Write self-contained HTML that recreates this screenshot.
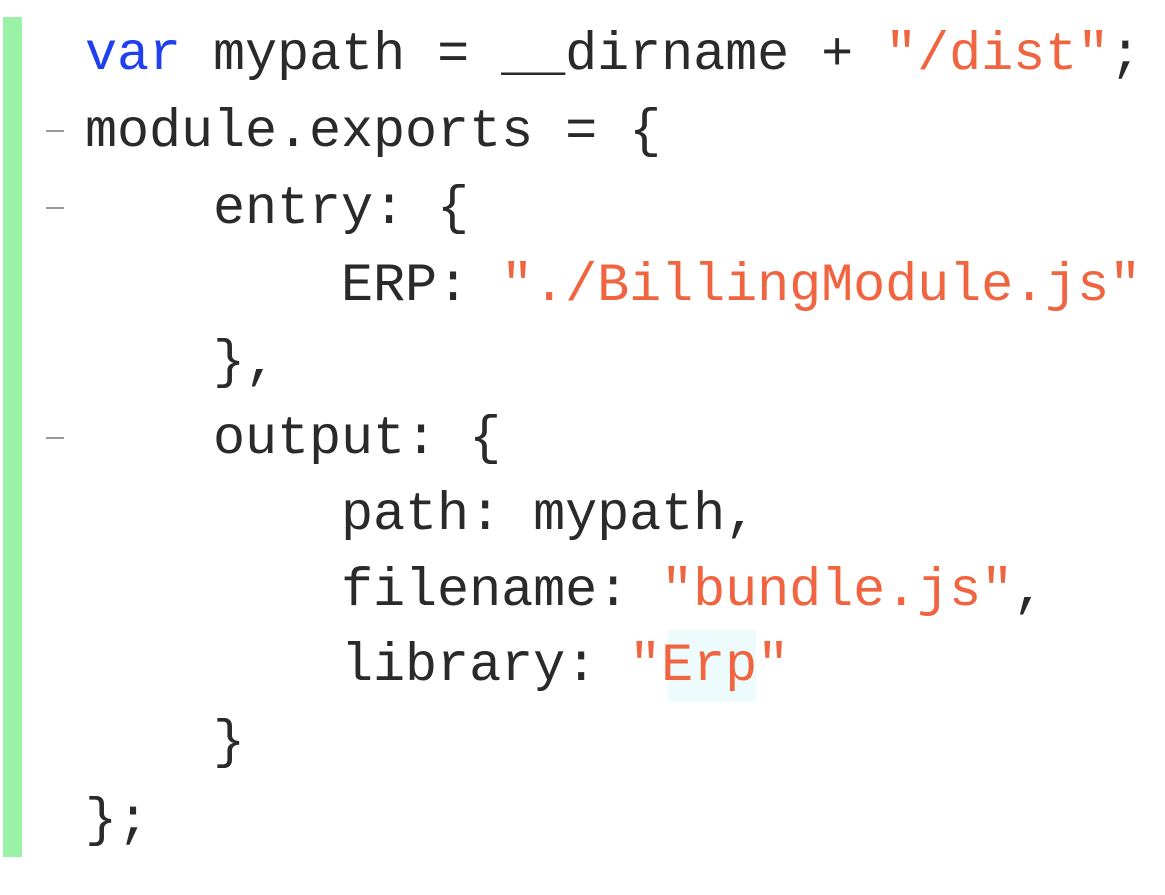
<!DOCTYPE html>
<html><head><style>
html,body{margin:0;padding:0;background:#fff;width:1165px;height:895px;overflow:hidden;position:relative}
.bar{position:absolute;left:3px;top:17px;width:19px;height:840px;background:#9af2a6}
.d{position:absolute;left:46px;width:18px;height:2px;background:#999}
.l{position:absolute;left:85px;font-family:"Liberation Mono",monospace;font-size:53.5px;line-height:77px;height:77px;color:#2a2a2a;white-space:pre;letter-spacing:-0.1px}
.k{color:#1f3ff0}.s{color:#f0653f}
.hl{position:absolute;left:668px;top:630px;width:88px;height:72px;background:#eefbfd}
</style></head><body>
<div class="bar"></div>
<div class="d" style="top:130px"></div>
<div class="d" style="top:207px"></div>
<div class="d" style="top:437px"></div>
<div class="hl"></div>
<div class="l" style="top:17px"><span class="k">var</span> mypath = __dirname + <span class="s">"/dist"</span>;</div>
<div class="l" style="top:94px">module.exports = {</div>
<div class="l" style="top:171px">    entry: {</div>
<div class="l" style="top:248px">        ERP: <span class="s">"./BillingModule.js"</span></div>
<div class="l" style="top:325px">    },</div>
<div class="l" style="top:401px">    output: {</div>
<div class="l" style="top:477px">        path: mypath,</div>
<div class="l" style="top:553px">        filename: <span class="s">"bundle.js"</span>,</div>
<div class="l" style="top:628px">        library: <span class="s">"Erp"</span></div>
<div class="l" style="top:705px">    }</div>
<div class="l" style="top:783px">};</div>
</body></html>
